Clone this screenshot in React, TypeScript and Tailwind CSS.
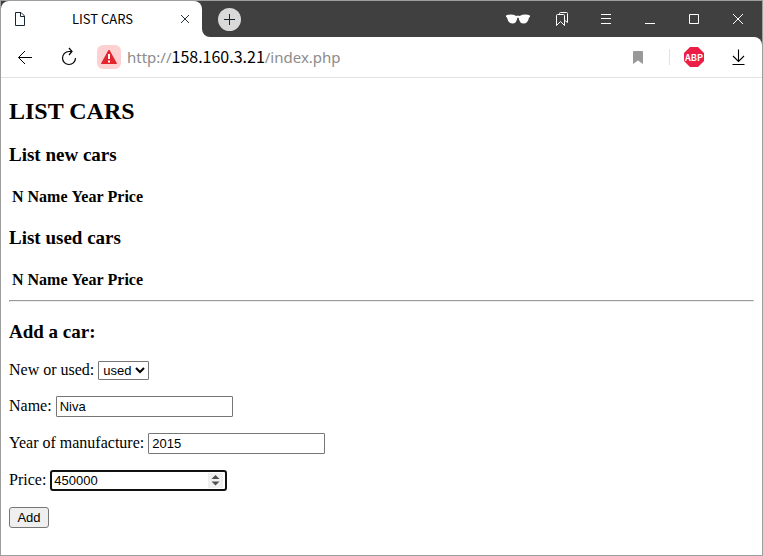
import type { ReactNode } from "react";

const HEADINGS = ["N", "Name", "Year", "Price"];

function TitleButton({ label, children }: { label: string; children: ReactNode }) {
  return (
    <button type="button" aria-label={label} className="h-9 w-11">
      <svg width="44" height="36" viewBox="0 0 44 36" fill="none" stroke="#fff">
        {children}
      </svg>
    </button>
  );
}

function TabStrip() {
  return (
    <header className="flex h-9 bg-white font-['Noto_Sans_CJK_SC',sans-serif]">
      <div className="w-[201px] shrink-0 bg-[#404040]">
        <div className="flex h-full items-center rounded-t-lg bg-white pr-3 pl-3.5">
          <svg width="10" height="14" viewBox="0 0 10 14" fill="none" stroke="#172635">
            <path d="M.5.5H6L9.500 4V13.500H.5Z" />
            <path d="M5.500.5V4.500H9.500" />
          </svg>
          <span className="flex-1 text-center text-[13px] leading-5 text-black">LIST CARS</span>
          <button type="button" aria-label="Close tab">
            <svg width="10" height="10" viewBox="0 0 10 10" fill="none" stroke="#26323e">
              <path d="M1 1L9 9M9 1L1 9" />
            </svg>
          </button>
        </div>
      </div>
      <div className="flex flex-1 items-center rounded-bl-lg bg-[#404040] pr-0.5 pl-4">
        <button type="button" aria-label="New tab" className="rounded-full bg-[#d9d9d9]">
          <svg width="23" height="23" viewBox="0 0 23 23" fill="none" stroke="#172635">
            <path d="M6 11.500H17M11.500 6V17" />
          </svg>
        </button>
        <div className="ml-auto flex">
          <TitleButton label="Incognito">
            <path
              d="M10 14.500Q15 12.500 20.500 15Q22 14 23.500 15Q29 12.500 34 14.500V16L33 16.500Q32 22.500 27.500 22.500Q23.500 22.500 22.700 17Q22 16 21.300 17Q20.500 22.500 16.500 22.500Q12 22.500 11 16.500L10 16Z"
              fill="#fff"
              stroke="none"
            />
          </TitleButton>
          <TitleButton label="Collections">
            <path d="M16.500 14.500Q16.500 13.500 17.500 13.500H23.500Q24.500 13.500 24.500 14.500V24.500L20.500 20.500L16.500 24.500Z" />
            <path d="M19.500 13.500V12.500Q19.500 11.500 20.500 11.500H26.500Q27.500 11.500 27.500 12.500V21.500L25 19.500" />
          </TitleButton>
          <TitleButton label="Menu">
            <path d="M17 13.500H27M17 17.500H27M17 22.500H27" />
          </TitleButton>
          <TitleButton label="Minimize">
            <path d="M17 22.500H27" />
          </TitleButton>
          <TitleButton label="Maximize">
            <path d="M17.500 13.500H26.500V22.500H17.500Z" />
          </TitleButton>
          <TitleButton label="Close window">
            <path d="M17 13L27 23M27 13L17 23" />
          </TitleButton>
        </div>
      </div>
    </header>
  );
}

function Toolbar() {
  return (
    <div className="bg-[#404040]">
      <nav className="flex h-[41px] items-center rounded-tr-lg border-b border-[#e2e2e2] bg-white pr-4 pl-4">
        <button type="button" aria-label="Back">
          <svg width="16" height="16" viewBox="0 0 16 16" fill="none" stroke="#000">
            <path d="M15 8.500H1.500M8 2L1.500 8.500L8 15" />
          </svg>
        </button>
        <button type="button" aria-label="Reload" className="ml-7">
          <svg width="16" height="20" viewBox="0 0 16 20" fill="none" stroke="#000" strokeWidth="1.2">
            <path d="M14.500 11A6.500 6.500 0 1 1 8 4.500H10.500" />
            <path d="M8 1L11 4.500L8 8" />
          </svg>
        </button>
        <button type="button" aria-label="Not secure" className="ml-5 rounded-md bg-[#fdd0d2]">
          <svg width="24" height="24" viewBox="0 0 24 24">
            <path d="M12 5L19.500 18.500H4.500Z" fill="#e3242d" stroke="#e3242d" strokeLinejoin="round" />
            <path d="M12 9V14M12 15.500V17.500" stroke="#fff" strokeWidth="2" />
          </svg>
        </button>
        <button
          type="button"
          aria-label="Address"
          className="ml-1.5 flex-1 text-left font-['Noto_Sans',sans-serif] text-[15px] leading-6 text-[#8c8c8c]"
        >
          http://
          <span className="font-['Noto_Sans_CJK_SC',sans-serif] text-base leading-none text-black">158.160.3.21</span>
          /index.php
        </button>
        <button type="button" aria-label="Bookmark">
          <svg width="10" height="13" viewBox="0 0 10 13" fill="#999">
            <path d="M0 1Q0 0 1 0H9Q10 0 10 1V13L5 9.500L0 13Z" />
          </svg>
        </button>
        <span className="ml-[26px] h-4 w-px bg-[#e2e2e2]" />
        <button type="button" aria-label="Adblock Plus" className="ml-3.5">
          <svg width="20" height="20" viewBox="0 0 20 20">
            <path d="M6 0H14L20 6V14L14 20H6L0 14V6Z" fill="#ed1e45" />
            <text
              x="10"
              y="13.500"
              textAnchor="middle"
              fill="#fff"
              fontSize="9"
              fontWeight="700"
              fontFamily="Noto Sans CJK SC, sans-serif"
            >
              ABP
            </text>
          </svg>
        </button>
        <button type="button" aria-label="Downloads" className="ml-7">
          <svg width="14" height="16" viewBox="0 0 14 16" fill="none" stroke="#000" strokeWidth="1.1">
            <path d="M6.500 .5V12.500M1 7L6.500 12.500L12 7M.5 15.500H12.500" />
          </svg>
        </button>
      </nav>
    </div>
  );
}

function CarTable({ label }: { label: string }) {
  return (
    <table aria-label={label} className="mt-5 mb-[18px] border-separate border-spacing-0.5">
      <thead>
        <tr>
          {HEADINGS.map((heading) => (
            <th key={heading} scope="col" className="p-px font-bold">
              {heading}
            </th>
          ))}
        </tr>
      </thead>
    </table>
  );
}

function CarForm() {
  return (
    <form className="mt-[19px] flex flex-col gap-4" onSubmit={(event) => event.preventDefault()}>
      <p className="flex items-baseline gap-1">
        <label htmlFor="condition">New or used:</label>
        <select
          id="condition"
          defaultValue="used"
          className="h-[19px] w-[51px] rounded-[1px] border border-[#767676] bg-white font-['Liberation_Sans',sans-serif] text-[13px]"
        >
          <option>new</option>
          <option>used</option>
        </select>
      </p>
      <p className="flex items-baseline gap-1">
        <label htmlFor="name">Name:</label>
        <input
          id="name"
          type="text"
          defaultValue="Niva"
          className="h-[21px] w-[177px] rounded-[1px] border border-[#767676] px-[3px] font-['Liberation_Sans',sans-serif] text-[13px]"
        />
      </p>
      <p className="flex items-baseline gap-1">
        <label htmlFor="year">Year of manufacture:</label>
        <input
          id="year"
          type="number"
          defaultValue="2015"
          className="h-[21px] w-[177px] rounded-[1px] border border-[#767676] px-[3px] font-['Liberation_Sans',sans-serif] text-[13px]"
        />
      </p>
      <p className="flex items-baseline gap-1">
        <label htmlFor="price">Price:</label>
        <span className="relative">
          <input
            id="price"
            type="number"
            defaultValue="450000"
            className="block h-[21px] w-[177px] rounded-[3px] border-2 border-[#101010] px-0.5 font-['Liberation_Sans',sans-serif] text-[13px]"
          />
          <svg
            aria-hidden="true"
            className="pointer-events-none absolute inset-y-0 right-1 my-auto"
            width="15"
            height="15"
            viewBox="0 0 15 15"
          >
            <path d="M0 0H15V15H0Z" fill="#efefef" />
            <path d="M3.500 6L7.500 2L11.500 6ZM3.500 8.500L7.500 12.500L11.500 8.500Z" fill="#4f4f4f" />
          </svg>
        </span>
      </p>
      <button
        type="submit"
        className="h-[21px] w-10 rounded-[3px] border border-[#767676] bg-[#efefef] font-['Liberation_Sans',sans-serif] text-[13px]"
      >
        Add
      </button>
    </form>
  );
}

export default function App() {
  return (
    <div className="flex min-h-screen flex-col border border-[#9e9e9e] bg-white">
      <TabStrip />
      <Toolbar />
      <main className="px-2 pt-5 font-['Liberation_Serif',serif] text-base leading-[18px] text-black">
        <h1 className="mb-[19px] text-2xl leading-[27px] font-bold">LIST CARS</h1>
        <h2 className="text-[19px] leading-[21px] font-bold">List new cars</h2>
        <CarTable label="New cars" />
        <h2 className="text-[19px] leading-[21px] font-bold">List used cars</h2>
        <CarTable label="Used cars" />
        <hr className="-mt-2.5 mb-[19px] h-0.5 border border-[#eee] border-t-[#9a9a9a] border-l-[#9a9a9a]" />
        <h2 className="text-[19px] leading-[21px] font-bold">Add a car:</h2>
        <CarForm />
      </main>
    </div>
  );
}
